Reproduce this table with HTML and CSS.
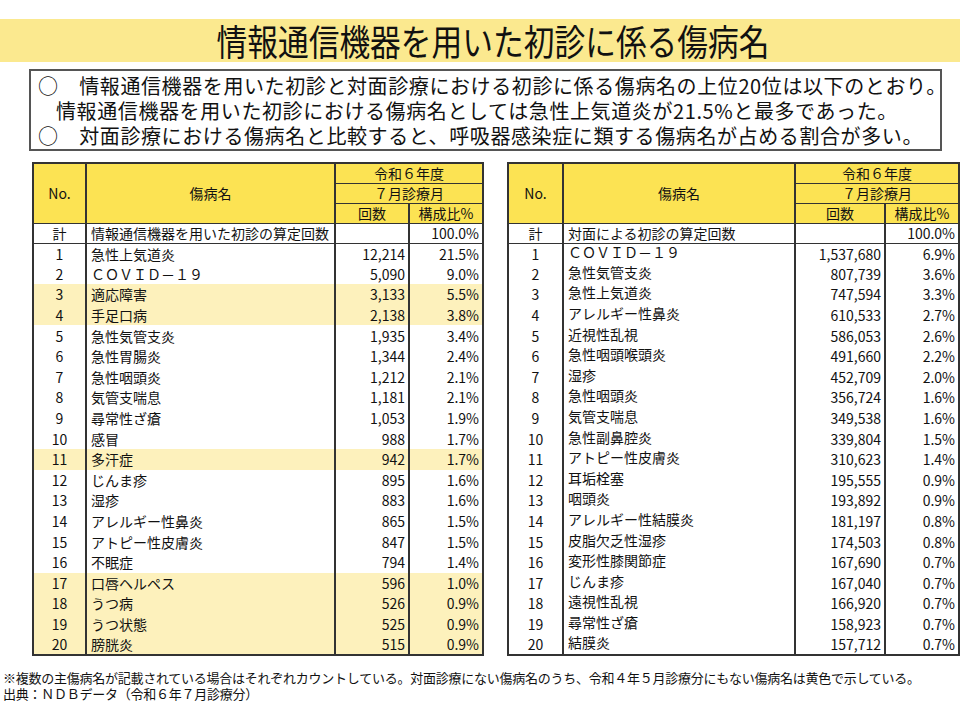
FILE: index.html
```html
<!DOCTYPE html>
<html lang="ja">
<head>
<meta charset="utf-8">
<link rel="stylesheet" href="styles.css">
</head>
<body>
<div class="title-band"><h1 class="title"><span class="title-text">情報通信機器を用いた初診に係る傷病名</span></h1></div>
<div class="summary">
  <p class="line">○　情報通信機器を用いた初診と対面診療における初診に係る傷病名の上位20位は以下のとおり。</p>
  <p class="line indent">情報通信機器を用いた初診における傷病名としては急性上気道炎が21.5%と最多であった。</p>
  <p class="line">○　対面診療における傷病名と比較すると、呼吸器感染症に類する傷病名が占める割合が多い。</p>
</div>
<div class="tables">
  <table class="data left">
    <colgroup><col class="c-no-l"><col class="c-name-l"><col class="c-cnt-l"><col class="c-pct"></colgroup>
    <thead>
      <tr class="hr"><th rowspan="3" class="th-no">No.</th><th rowspan="3" class="th-name">傷病名</th><th colspan="2">令和６年度</th></tr>
      <tr class="hr"><th colspan="2">７月診療月</th></tr>
      <tr class="hr"><th>回数</th><th>構成比%</th></tr>
    </thead>
    <tbody>
      <tr class="total"><td class="no">計</td><td class="name">情報通信機器を用いた初診の算定回数</td><td class="num"></td><td class="num">100.0%</td></tr>
      <tr class="first"><td class="no">1</td><td class="name">急性上気道炎</td><td class="num">12,214</td><td class="num">21.5%</td></tr>
      <tr><td class="no">2</td><td class="name">ＣＯＶＩＤ－１９</td><td class="num">5,090</td><td class="num">9.0%</td></tr>
      <tr class="hl"><td class="no">3</td><td class="name">適応障害</td><td class="num">3,133</td><td class="num">5.5%</td></tr>
      <tr class="hl"><td class="no">4</td><td class="name">手足口病</td><td class="num">2,138</td><td class="num">3.8%</td></tr>
      <tr><td class="no">5</td><td class="name">急性気管支炎</td><td class="num">1,935</td><td class="num">3.4%</td></tr>
      <tr><td class="no">6</td><td class="name">急性胃腸炎</td><td class="num">1,344</td><td class="num">2.4%</td></tr>
      <tr><td class="no">7</td><td class="name">急性咽頭炎</td><td class="num">1,212</td><td class="num">2.1%</td></tr>
      <tr><td class="no">8</td><td class="name">気管支喘息</td><td class="num">1,181</td><td class="num">2.1%</td></tr>
      <tr><td class="no">9</td><td class="name">尋常性ざ瘡</td><td class="num">1,053</td><td class="num">1.9%</td></tr>
      <tr><td class="no">10</td><td class="name">感冒</td><td class="num">988</td><td class="num">1.7%</td></tr>
      <tr class="hl"><td class="no">11</td><td class="name">多汗症</td><td class="num">942</td><td class="num">1.7%</td></tr>
      <tr><td class="no">12</td><td class="name">じんま疹</td><td class="num">895</td><td class="num">1.6%</td></tr>
      <tr><td class="no">13</td><td class="name">湿疹</td><td class="num">883</td><td class="num">1.6%</td></tr>
      <tr><td class="no">14</td><td class="name">アレルギー性鼻炎</td><td class="num">865</td><td class="num">1.5%</td></tr>
      <tr><td class="no">15</td><td class="name">アトピー性皮膚炎</td><td class="num">847</td><td class="num">1.5%</td></tr>
      <tr><td class="no">16</td><td class="name">不眠症</td><td class="num">794</td><td class="num">1.4%</td></tr>
      <tr class="hl"><td class="no">17</td><td class="name">口唇ヘルペス</td><td class="num">596</td><td class="num">1.0%</td></tr>
      <tr class="hl"><td class="no">18</td><td class="name">うつ病</td><td class="num">526</td><td class="num">0.9%</td></tr>
      <tr class="hl"><td class="no">19</td><td class="name">うつ状態</td><td class="num">525</td><td class="num">0.9%</td></tr>
      <tr class="hl"><td class="no">20</td><td class="name">膀胱炎</td><td class="num">515</td><td class="num">0.9%</td></tr>
    </tbody>
  </table>
  <table class="data right">
    <colgroup><col class="c-no-r"><col class="c-name-r"><col class="c-cnt-r"><col class="c-pct"></colgroup>
    <thead>
      <tr class="hr"><th rowspan="3" class="th-no">No.</th><th rowspan="3" class="th-name">傷病名</th><th colspan="2">令和６年度</th></tr>
      <tr class="hr"><th colspan="2">７月診療月</th></tr>
      <tr class="hr"><th>回数</th><th>構成比%</th></tr>
    </thead>
    <tbody>
      <tr class="total"><td class="no">計</td><td class="name">対面による初診の算定回数</td><td class="num"></td><td class="num">100.0%</td></tr>
      <tr class="first"><td class="no">1</td><td class="name up">ＣＯＶＩＤ－１９</td><td class="num">1,537,680</td><td class="num">6.9%</td></tr>
      <tr><td class="no">2</td><td class="name up">急性気管支炎</td><td class="num">807,739</td><td class="num">3.6%</td></tr>
      <tr><td class="no">3</td><td class="name up">急性上気道炎</td><td class="num">747,594</td><td class="num">3.3%</td></tr>
      <tr><td class="no">4</td><td class="name up">アレルギー性鼻炎</td><td class="num">610,533</td><td class="num">2.7%</td></tr>
      <tr><td class="no">5</td><td class="name up">近視性乱視</td><td class="num">586,053</td><td class="num">2.6%</td></tr>
      <tr><td class="no">6</td><td class="name up">急性咽頭喉頭炎</td><td class="num">491,660</td><td class="num">2.2%</td></tr>
      <tr><td class="no">7</td><td class="name up">湿疹</td><td class="num">452,709</td><td class="num">2.0%</td></tr>
      <tr><td class="no">8</td><td class="name up">急性咽頭炎</td><td class="num">356,724</td><td class="num">1.6%</td></tr>
      <tr><td class="no">9</td><td class="name up">気管支喘息</td><td class="num">349,538</td><td class="num">1.6%</td></tr>
      <tr><td class="no">10</td><td class="name up">急性副鼻腔炎</td><td class="num">339,804</td><td class="num">1.5%</td></tr>
      <tr><td class="no">11</td><td class="name up">アトピー性皮膚炎</td><td class="num">310,623</td><td class="num">1.4%</td></tr>
      <tr><td class="no">12</td><td class="name up">耳垢栓塞</td><td class="num">195,555</td><td class="num">0.9%</td></tr>
      <tr><td class="no">13</td><td class="name up">咽頭炎</td><td class="num">193,892</td><td class="num">0.9%</td></tr>
      <tr><td class="no">14</td><td class="name up">アレルギー性結膜炎</td><td class="num">181,197</td><td class="num">0.8%</td></tr>
      <tr><td class="no">15</td><td class="name up">皮脂欠乏性湿疹</td><td class="num">174,503</td><td class="num">0.8%</td></tr>
      <tr><td class="no">16</td><td class="name up">変形性膝関節症</td><td class="num">167,690</td><td class="num">0.7%</td></tr>
      <tr><td class="no">17</td><td class="name up">じんま疹</td><td class="num">167,040</td><td class="num">0.7%</td></tr>
      <tr><td class="no">18</td><td class="name up">遠視性乱視</td><td class="num">166,920</td><td class="num">0.7%</td></tr>
      <tr><td class="no">19</td><td class="name up">尋常性ざ瘡</td><td class="num">158,923</td><td class="num">0.7%</td></tr>
      <tr><td class="no">20</td><td class="name up">結膜炎</td><td class="num">157,712</td><td class="num">0.7%</td></tr>
    </tbody>
  </table>
</div>
<div class="notes">
  <p class="note">※複数の主傷病名が記載されている場合はそれぞれカウントしている。対面診療にない傷病名のうち、令和４年５月診療分にもない傷病名は黄色で示している。</p>
  <p class="note">出典：ＮＤＢデータ（令和６年７月診療分）</p>
</div>
</body>
</html>
```
FILE: styles.css
```css
html, body {
  margin: 0;
  padding: 0;
  background: #ffffff;
}
body {
  width: 960px;
  height: 720px;
  overflow: hidden;
  font-family: "Noto Sans CJK JP", "Noto Sans", sans-serif;
  color: #111;
}
.title-band {
  margin-top: 19px;
  height: 43px;
  background: #fbe98f;
  display: flex;
  align-items: center;
  justify-content: center;
  padding-left: 26px;
}
.title {
  margin: 0;
  font-size: 32px;
  font-weight: 400;
  line-height: 43px;
  letter-spacing: 0;
}
.title-text {
  display: inline-block;
  transform: scale(0.96, 1.12);
}
.summary {
  margin: 7px 0 0 29px;
  width: 913px;
  border: 2px solid #555;
  padding: 2px 0 4px 7px;
  box-sizing: border-box;
  height: 82px;
}
.line {
  margin: 0;
  font-size: 20px;
  line-height: 25px;
  letter-spacing: 0.6px;
  white-space: nowrap;
}
.line.indent {
  padding-left: 18px;
}
.tables {
  margin-top: 11px;
  padding-left: 32px;
  display: flex;
  gap: 23px;
  align-items: flex-start;
}
.data {
  border-collapse: collapse;
  table-layout: fixed;
  width: 451px;
  border: 2px solid #333;
  font-size: 14px;
}
.c-no-l { width: 53px; }
.c-name-l { width: 249px; }
.c-cnt-l { width: 74px; }
.c-no-r { width: 55px; }
.c-name-r { width: 232px; }
.c-cnt-r { width: 90px; }
.c-pct { width: 74px; }
.data th {
  background: #fce353;
  font-weight: 400;
  border: 1px solid #333;
  border-left: 2px solid #333;
  padding: 0;
  text-align: center;
  line-height: 18px;
  white-space: nowrap;
}
.data thead tr.hr { height: 20px; }
.data td {
  padding: 0;
  line-height: 18px;
  border-left: 2px solid #333;
  white-space: nowrap;
  vertical-align: middle;
}
.data tbody tr { height: 20.6px; }
.data tr.total { height: 20px; }
.data tr.total td { border-bottom: 1px solid #333; }
.data td.no { text-align: center; border-left: none; }
.data td.name { padding-left: 4px; }
.data td.num { text-align: right; padding-right: 3px; }
.data td.up { line-height: 16px; padding-bottom: 4px; }
.data tr.hl td { background: #fdf1bc; }
.notes {
  margin-top: 14px;
  padding-left: 3px;
}
.note {
  margin: 0;
  font-size: 13px;
  line-height: 16px;
  letter-spacing: -0.25px;
  white-space: nowrap;
}
```
